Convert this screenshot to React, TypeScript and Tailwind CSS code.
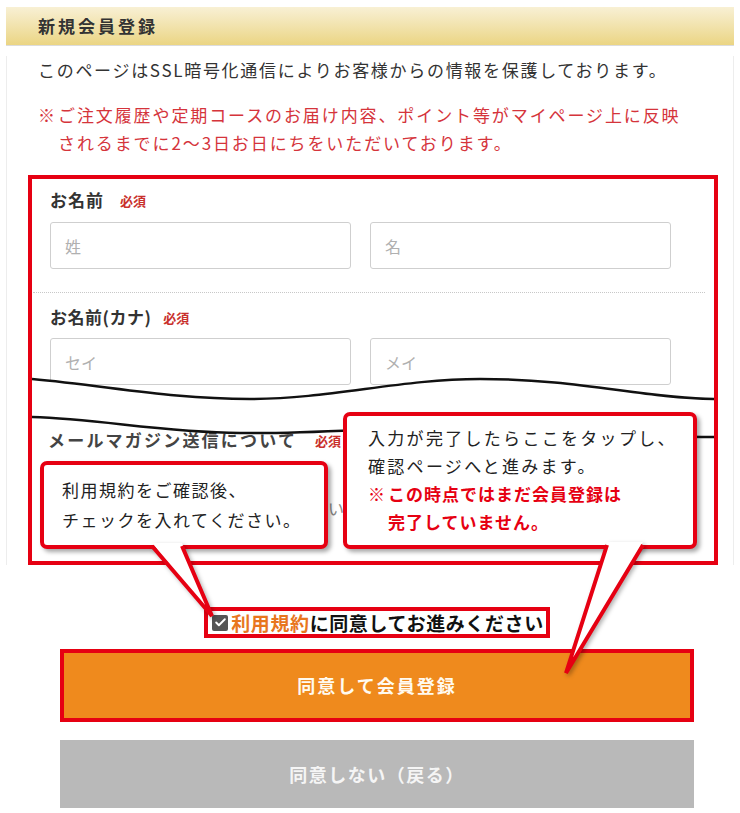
import { Check } from 'lucide-react';

const RED = 'border-[#e60012]';

function Required() {
  return <span className="text-[13px] font-bold text-[#c9302c] leading-none">必須</span>;
}

function NameInput({ placeholder }: { placeholder: string }) {
  return (
    <div className="w-[301px] h-[47px] border border-[#cfcfcf] rounded-[3px] bg-white flex items-center pl-[14px] text-[16px] text-[#b0b0b0]">
      {placeholder}
    </div>
  );
}

export default function App() {
  return (
    <div className="relative w-[740px] h-[813px] overflow-hidden bg-white text-[#333] font-['Noto_Sans_CJK_JP','Liberation_Sans',sans-serif]">
      {/* Section heading */}
      <div className="mt-[7px] mx-[6px] h-[39px] bg-gradient-to-b from-[#f8f0d4] to-[#ebd583] border-b border-[#dcdcdc] flex items-center pl-[32px]">
        <h1 className="text-[17px] font-semibold tracking-[3px] text-[#333]">新規会員登録</h1>
      </div>

      <div className="mx-[6px] border-x border-[#ededed]">
        <p className="mt-[10px] pl-[31px] text-[17px] leading-[28px] tracking-[1.7px] whitespace-nowrap">
          このページはSSL暗号化通信によりお客様からの情報を保護しております。
        </p>

        <div className="mt-[17px] pl-[31px] flex text-[17px] leading-[28px] tracking-[1.9px] text-[#d5343b] whitespace-nowrap">
          <span className="w-[20px] shrink-0">※</span>
          <span>
            ご注文履歴や定期コースのお届け内容、ポイント等がマイページ上に反映
            <br />
            されるまでに2〜3日お日にちをいただいております。
          </span>
        </div>

        {/* Form area, framed in red */}
        <div className={`relative mt-[18px] ml-[21px] w-[690px] h-[390px] border-4 ${RED}`}>
          <div className="mt-[9px] ml-[18px] flex items-center gap-[16px] h-[24px]">
            <span className="text-[17px] font-bold tracking-[1px]">お名前</span>
            <Required />
          </div>
          <div className="mt-[10px] ml-[18px] flex gap-[19px]">
            <NameInput placeholder="姓" />
            <NameInput placeholder="名" />
          </div>

          <div className="mt-[23px] ml-[1px] mr-[9px] border-t border-dotted border-[#c8c8c8]" />

          <div className="mt-[12px] ml-[18px] flex items-center gap-[12px] h-[24px]">
            <span className="text-[17px] font-bold tracking-[0.5px]">お名前(カナ)</span>
            <Required />
          </div>
          <div className="mt-[9px] ml-[18px] flex gap-[19px]">
            <NameInput placeholder="セイ" />
            <NameInput placeholder="メイ" />
          </div>

          <div className="mt-[43px] ml-[16px] flex items-center gap-[18px] h-[24px]">
            <span className="text-[17px] font-bold tracking-[2.2px] text-[#444]">メールマガジン送信について</span>
            <Required />
          </div>
          <div className="mt-[44px] ml-[280px] h-[24px] text-[16px] text-[#888] whitespace-nowrap">
            ない
          </div>

          {/* cut-out break between the two waves */}
          <svg
            className="absolute left-0 top-[190px] w-[682px] h-[80px]"
            viewBox="32 369 682 80"
            fill="none"
          >
            <path
              d="M32,379 C110,386 170,399 250,399 C330,399 400,379 480,379 C580,379 640,398 714,399 L714,437 C620,437 540,427 450,427 C380,427 320,434 240,433 C160,432 100,419 32,417 Z"
              fill="#fff"
            />
            <path
              d="M32,379 C110,386 170,399 250,399 C330,399 400,379 480,379 C580,379 640,398 714,399"
              stroke="#111"
              strokeWidth="2.5"
            />
            <path
              d="M32,417 C100,419 160,432 240,433 C320,434 380,427 450,427 C540,427 620,437 714,437"
              stroke="#111"
              strokeWidth="2.5"
            />
          </svg>
        </div>
      </div>

      {/* Agreement + buttons */}
      <div className="ml-[60px] w-[634px]">
        <div className="mt-[42px] flex justify-center">
          <div className={`inline-flex items-center h-[31px] border-4 ${RED} pl-[4px] pr-[2px] gap-[3px]`}>
            <span className="w-[16px] h-[16px] rounded-[2px] bg-[#555] flex items-center justify-center">
              <Check size={13} strokeWidth={3.5} color="#fff" />
            </span>
            <span className="text-[19px] font-bold tracking-[0.6px] leading-none whitespace-nowrap">
              <span className="text-[#e8761e]">利用規約</span>
              <span className="text-[#111]">に同意してお進みください</span>
            </span>
          </div>
        </div>

        <div className={`mt-[11px] h-[73px] border-4 ${RED} bg-[#ef8a1d] flex items-center justify-center`}>
          <span className="text-[18px] font-bold tracking-[2px] text-[#fffaf0]">同意して会員登録</span>
        </div>

        <div className="mt-[18px] h-[68px] bg-[#b9b9b9] flex items-center justify-center">
          <span className="text-[18px] font-bold tracking-[1.5px] text-[#f5f5f5]">同意しない（戻る）</span>
        </div>
      </div>

      {/* Annotation callouts */}
      <div className={`absolute left-[40px] top-[461px] w-[288px] h-[88px] bg-white border-4 ${RED} rounded-[7px] shadow-[3px_3px_4px_rgba(0,0,0,0.35)] pl-[18px] pt-[10px] text-[17px] leading-[30px] tracking-[1.5px] text-[#222] whitespace-nowrap`}>
        利用規約をご確認後、
        <br />
        チェックを入れてください。
      </div>

      <div className={`absolute left-[343px] top-[412px] w-[354px] h-[137px] bg-white border-4 ${RED} rounded-[7px] shadow-[3px_3px_4px_rgba(0,0,0,0.35)] pl-[21px] pt-[8px] text-[17px] leading-[28px] text-[#222] whitespace-nowrap`}>
        <div className="tracking-[2.3px]">入力が完了したらここをタップし、</div>
        <div className="tracking-[2.3px]">確認ページへと進みます。</div>
        <div className="flex font-bold text-[#e60012] tracking-[1px]">
          <span className="w-[20px] shrink-0">※</span>
          <span>
            この時点ではまだ会員登録は
            <br />
            完了していません。
          </span>
        </div>
      </div>

      {/* callout tails */}
      <svg
        className="absolute left-[140px] top-[540px] w-[520px] h-[140px] drop-shadow-[2px_2px_2px_rgba(0,0,0,0.3)]"
        viewBox="140 540 520 140"
        fill="none"
      >
        <polygon points="152,543 182,543 212,616" fill="#fff" />
        <polyline points="152,546 212,616 182,546" stroke="#e60012" strokeWidth="4" strokeLinejoin="miter" />
        <polygon points="607,542 643,542 566,673" fill="#fff" />
        <polyline points="607,545 566,673 643,545" stroke="#e60012" strokeWidth="4" strokeLinejoin="miter" />
      </svg>
    </div>
  );
}
